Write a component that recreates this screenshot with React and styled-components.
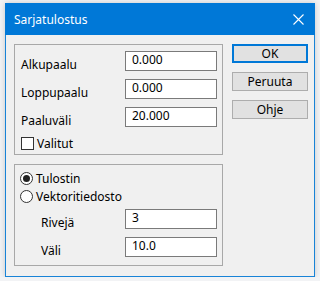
import React from "react";
import styled, { createGlobalStyle } from "styled-components";

const GlobalStyle = createGlobalStyle`
  html, body {
    margin: 0;
    padding: 0;
    background: #f2f3f5;
  }
  body {
    font-family: "Noto Sans", "Open Sans", sans-serif;
    font-size: 12px;
    color: #000;
  }
`;

const Window = styled.div`
  box-sizing: border-box;
  width: 310px;
  height: 274px;
  margin: 3px 0 0 5px;
  border: 1px solid #1883d7;
  border-top: none;
  background: #f0f0f0;
  box-shadow: 0 0 6px rgba(0, 0, 0, 0.18);
  display: flex;
  flex-direction: column;
`;

const TitleBar = styled.div`
  height: 32px;
  margin: 0 -1px;
  background: #0078d7;
  color: #fff;
  display: flex;
  align-items: center;
  justify-content: space-between;
  padding: 0 11px 0 9px;
  font-size: 12px;
`;

const Body = styled.div`
  display: flex;
  gap: 9px;
  padding: 9px 7px 0 8px;
`;

const Column = styled.div`
  display: flex;
  flex-direction: column;
  gap: 9px;
`;

const Group = styled.div`
  box-sizing: border-box;
  width: 209px;
  height: ${(p) => p.h}px;
  border: 1px solid #a8a8a8;
  padding: ${(p) => p.pad};
  display: flex;
  flex-direction: column;
`;

const Row = styled.div`
  display: flex;
  justify-content: space-between;
  align-items: flex-start;
  height: 20px;
  margin-bottom: 8px;
  padding-left: ${(p) => p.indent || 0}px;
`;

const Label = styled.span`
  padding-top: 6px;
  line-height: 15px;
`;

const Input = styled.div`
  box-sizing: border-box;
  width: 92px;
  height: 20px;
  border: 1px solid #7a7a7a;
  background: #fff;
  padding: 0 6px;
  line-height: 16px;
`;

const Check = styled.label`
  display: flex;
  align-items: center;
  gap: 3px;
  height: 13px;
  margin-top: ${(p) => p.mt || 0}px;
`;

const Box = styled.span`
  box-sizing: border-box;
  width: 13px;
  height: 13px;
  border: 1px solid #333;
  background: #fff;
`;

const Radio = styled.span`
  box-sizing: border-box;
  width: 13px;
  height: 13px;
  border: 1px solid #333;
  border-radius: 50%;
  background: #fff;
  display: flex;
  align-items: center;
  justify-content: center;
  &::after {
    content: "";
    width: 7px;
    height: 7px;
    border-radius: 50%;
    background: ${(p) => (p.on ? "#222" : "transparent")};
  }
`;

const Button = styled.div`
  box-sizing: border-box;
  width: 76px;
  height: 19px;
  background: #e1e1e1;
  border: ${(p) => (p.primary ? "2px solid #0078d7" : "1px solid #adadad")};
  display: flex;
  align-items: center;
  justify-content: center;
`;

const Buttons = styled.div`
  display: flex;
  flex-direction: column;
  gap: 9px;
`;

const Spacer = styled.div`
  height: ${(p) => p.h}px;
`;

const Close = () => (
  <svg width="11" height="11" viewBox="0 0 11 11">
    <path d="M0.5 0.5 L10.5 10.5 M10.5 0.5 L0.5 10.5" stroke="#fff" strokeWidth="1.1" />
  </svg>
);

export default function App() {
  return (
    <>
      <GlobalStyle />
      <Window>
        <TitleBar>
          <span>Sarjatulostus</span>
          <Close />
        </TitleBar>
        <Body>
          <Column>
            <Group h={111} pad="6px 5px 0 6px">
              <Row>
                <Label>Alkupaalu</Label>
                <Input>0.000</Input>
              </Row>
              <Row>
                <Label>Loppupaalu</Label>
                <Input>0.000</Input>
              </Row>
              <Row>
                <Label>Paaluväli</Label>
                <Input>20.000</Input>
              </Row>
              <Check mt={2}>
                <Box />
                Valitut
              </Check>
            </Group>
            <Group h={102} pad="7px 5px 0 5px">
              <Check>
                <Radio on />
                Tulostin
              </Check>
              <Check mt={5}>
                <Radio />
                Vektoritiedosto
              </Check>
              <Spacer h={9} />
              <Row indent={21}>
                <Label>Rivejä</Label>
                <Input>3</Input>
              </Row>
              <Row indent={21}>
                <Label>Väli</Label>
                <Input>10.0</Input>
              </Row>
            </Group>
          </Column>
          <Buttons>
            <Button primary>OK</Button>
            <Button>Peruuta</Button>
            <Button>Ohje</Button>
          </Buttons>
        </Body>
      </Window>
    </>
  );
}
